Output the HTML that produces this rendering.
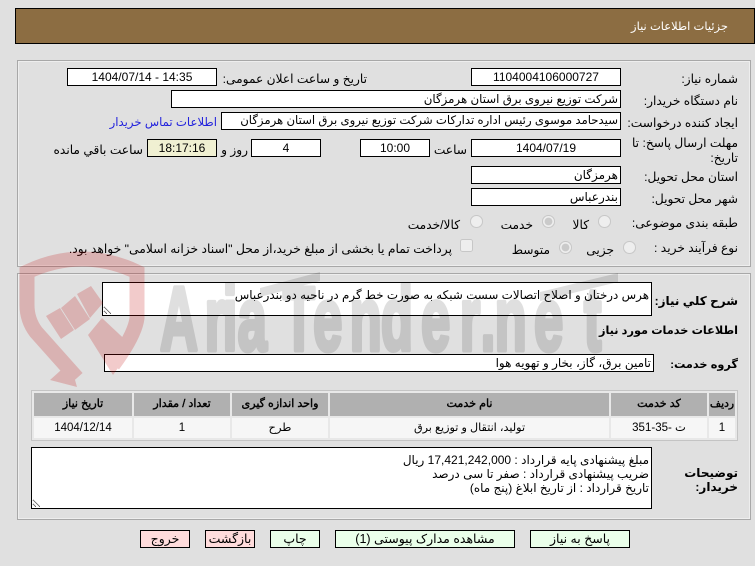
<!DOCTYPE html>
<html lang="fa" dir="rtl">
<head>
<meta charset="utf-8">
<title>جزئیات اطلاعات نیاز</title>
<style>
html,body{margin:0;padding:0;width:755px;height:566px;overflow:hidden;background:#e0e0e0}
body{position:relative;font-family:"Liberation Sans","DejaVu Sans",sans-serif;font-size:12px;color:#000}
.a{position:absolute;box-sizing:border-box}
.t{position:absolute;white-space:nowrap;line-height:16px;height:16px;direction:rtl;font-size:12.2px;margin-top:1px}
.b{font-weight:bold;font-size:11.3px}
.i{position:absolute;box-sizing:border-box;background:#fff;border:1px solid #000;height:18px;line-height:16px;white-space:nowrap;overflow:hidden;padding:0 2px;font-size:12px}
.c{text-align:center}
.p{position:absolute;box-sizing:border-box;left:17px;width:734px;border:1px solid #a8a8a8;box-shadow:inset 0 0 0 1px #eee}
.th,.td{position:absolute;box-sizing:border-box;text-align:center;white-space:nowrap;overflow:hidden}
.th{top:393px;height:23px;line-height:23px;background:#b0b0b0;font-size:11.1px;-webkit-text-stroke:.4px #000}
.td{top:418px;height:20px;line-height:21px;background:#f6f6f6;font-size:11.5px}
.btn{position:absolute;box-sizing:border-box;top:530px;height:18px;line-height:17px;border:1px solid #000;text-align:center;white-space:nowrap;font-size:12.5px}
.g{background:#eaffea}.r{background:#ffdcdc}
input{position:absolute;margin:0;width:13px;height:13px}
textarea{position:absolute;box-sizing:border-box;background:#fff;border:1px solid #000;margin:0;padding:0 2px;font-family:"Liberation Sans","DejaVu Sans",sans-serif;font-size:12px;line-height:14px;color:#000;direction:rtl;outline:none;overflow:hidden}
#wm{z-index:10;pointer-events:none}
</style>
</head>
<body>
<div class="a" style="left:15px;top:8px;width:740px;height:36px;background:#8c6d42;border:1px solid #000"></div>
<div class="t" style="right:27px;top:18px;color:#fff;font-size:11.5px">جزئیات اطلاعات نیاز</div>

<div class="p" style="top:60px;height:207px"></div>
<div class="p" style="top:273px;height:247px"></div>

<!-- row 1 -->
<div class="t" style="right:17px;top:70px">شماره نیاز:</div>
<div class="i c" style="left:471px;top:68px;width:150px">1104004106000727</div>
<div class="t" style="right:388px;top:70px">تاریخ و ساعت اعلان عمومی:</div>
<div class="i c" style="left:67px;top:68px;width:150px" dir="ltr">1404/07/14 - 14:35</div>

<div class="t" style="right:17px;top:92px">نام دستگاه خریدار:</div>
<div class="i" style="left:171px;top:90px;width:450px;font-size:11.8px">شرکت توزیع نیروی برق استان هرمزگان</div>

<div class="t" style="right:17px;top:114px">ایجاد کننده درخواست:</div>
<div class="i" style="left:221px;top:112px;width:400px;font-size:11.7px">سیدحامد موسوی رئیس اداره تدارکات شرکت توزیع نیروی برق استان هرمزگان</div>
<div class="t" style="right:538px;top:114px;color:#2222dd;font-size:11.7px">اطلاعات تماس خریدار</div>

<div class="t" style="right:17px;top:134px">مهلت ارسال پاسخ: تا</div>
<div class="t" style="right:17px;top:149px">تاریخ:</div>
<div class="i c" style="left:471px;top:139px;width:150px">1404/07/19</div>
<div class="t" style="right:288px;top:141px">ساعت</div>
<div class="i c" style="left:360px;top:139px;width:70px">10:00</div>
<div class="i c" style="left:251px;top:139px;width:70px">4</div>
<div class="t" style="right:507px;top:141px">روز و</div>
<div class="i c" style="left:147px;top:139px;width:70px;background:#f0f0d2">18:17:16</div>
<div class="t" style="right:612px;top:141px">ساعت باقي مانده</div>

<div class="t" style="right:17px;top:168px">استان محل تحویل:</div>
<div class="i" style="left:471px;top:166px;width:150px">هرمزگان</div>
<div class="t" style="right:17px;top:190px">شهر محل تحویل:</div>
<div class="i" style="left:471px;top:188px;width:150px">بندرعباس</div>

<div class="t" style="right:17px;top:214px">طبقه بندی موضوعی:</div>
<input type="radio" disabled style="left:598px;top:215px">
<div class="t" style="right:166px;top:216px">کالا</div>
<input type="radio" disabled checked style="left:542px;top:215px">
<div class="t" style="right:222px;top:216px">خدمت</div>
<input type="radio" disabled style="left:470px;top:215px">
<div class="t" style="right:295px;top:216px">کالا/خدمت</div>

<div class="t" style="right:17px;top:239px">نوع فرآیند خرید :</div>
<input type="radio" disabled style="left:623px;top:241px">
<div class="t" style="right:141px;top:241px">جزیی</div>
<input type="radio" disabled checked style="left:559px;top:241px">
<div class="t" style="right:205px;top:241px">متوسط</div>
<input type="checkbox" disabled style="left:460px;top:239px">
<div class="t" style="right:303px;top:240px;font-size:12.3px">پرداخت تمام یا بخشی از مبلغ خرید،از محل "اسناد خزانه اسلامی" خواهد بود.</div>

<!-- panel 2 -->
<div class="t b" style="right:17px;top:292px;font-size:12px">شرح کلي نياز:</div>
<textarea readonly style="left:102px;top:282px;width:550px;height:34px;padding-top:5px;font-size:11.9px">هرس درختان و اصلاح اتصالات سست شبکه به صورت خط گرم در ناحیه دو بندرعباس</textarea>
<div class="t b" style="right:17px;top:322px">اطلاعات خدمات مورد نياز</div>
<div class="t b" style="right:17px;top:356px">گروه خدمت:</div>
<div class="i" style="left:104px;top:354px;width:550px">تامین برق، گاز، بخار و تهویه هوا</div>

<div class="a" style="left:31px;top:390px;width:707px;height:51px;border:1px solid #c4c4c4;background:#e8e8e8"></div>
<div class="th" style="left:34px;width:98px">تاریخ نیاز</div>
<div class="th" style="left:134px;width:96px">تعداد / مقدار</div>
<div class="th" style="left:232px;width:96px">واحد اندازه گیری</div>
<div class="th" style="left:330px;width:279px">نام خدمت</div>
<div class="th" style="left:611px;width:96px">کد خدمت</div>
<div class="th" style="left:709px;width:26px;font-size:10.8px">ردیف</div>
<div class="td" style="left:34px;width:98px">1404/12/14</div>
<div class="td" style="left:134px;width:96px">1</div>
<div class="td" style="left:232px;width:96px">طرح</div>
<div class="td" style="left:330px;width:279px;font-size:11.2px">تولید، انتقال و توزیع برق</div>
<div class="td" style="left:611px;width:96px">ت -35-351</div>
<div class="td" style="left:709px;width:26px">1</div>

<div class="t b" style="right:17px;top:464px;font-size:12px">توضیحات</div>
<div class="t b" style="right:17px;top:478px;font-size:12px">خریدار:</div>
<textarea readonly style="left:31px;top:447px;width:621px;height:62px;padding-top:5px">مبلغ پیشنهادی پایه قرارداد : 17,421,242,000 ریال
ضریب پیشنهادی قرارداد : صفر تا سی درصد
تاریخ قرارداد : از تاریخ ابلاغ (پنج ماه)</textarea>

<div class="btn r" style="left:140px;width:50px">خروج</div>
<div class="btn r" style="left:205px;width:50px">بازگشت</div>
<div class="btn g" style="left:270px;width:50px">چاپ</div>
<div class="btn g" style="left:335px;width:180px">مشاهده مدارک پیوستی (1)</div>
<div class="btn g" style="left:530px;width:100px">پاسخ به نیاز</div>

<svg id="wm" class="a" style="left:0;top:0" width="755" height="566" viewBox="0 0 755 566">
  <g opacity="0.2" fill="#c00000">
    <path d="M77 378 L36 332 Q27 320 27 305 L27 272 Q82 246 137 272 L137 318 Q135 335 113 365" fill="none" stroke="#c00000" stroke-width="15"/>
    <polygon points="46,316 60,308 74,330 61,339"/>
    <polygon points="61,308 75,296 90,319 75,330"/>
    <polygon points="77,294 91,286 103,303 90,318"/>
    <polygon points="88,335 102,318 133,347 113,375"/>
    <polygon points="70,362 77,387 50,380"/>
  </g>
  <g opacity="0.12" fill="#000" stroke="#000" stroke-width="5" stroke-linejoin="round">
    <text transform="scale(.58,1)" y="350" x="276 353 384 410 488 540 603 657 726 793 829 853 921 1007" font-family="Liberation Sans" font-weight="bold" font-size="90" style="direction:ltr;unicode-bidi:bidi-override">AriaTender.net</text>
    <polygon points="260,288 320,272 320,281 260,297" stroke="none"/>
    <polygon points="540,292 618,273 618,282 540,301" stroke="none"/>
  </g>
</svg>
</body>
</html>
